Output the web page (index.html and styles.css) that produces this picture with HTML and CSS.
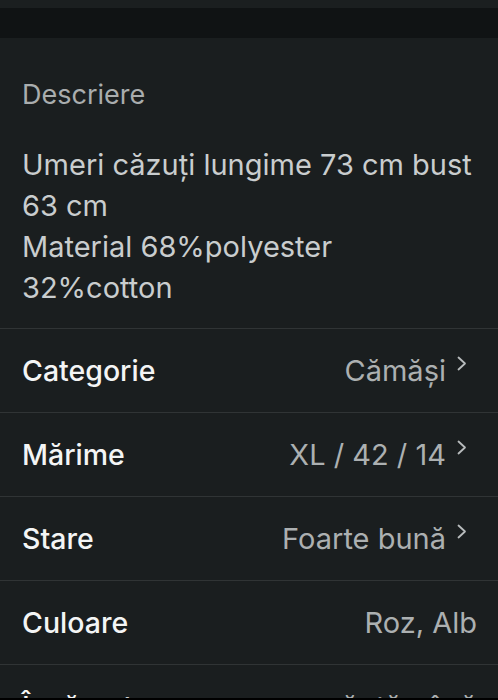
FILE: index.html
```html
<!DOCTYPE html>
<html lang="ro">
<head>
  <meta charset="UTF-8" />
  <meta name="viewport" content="width=device-width, initial-scale=1.0" />
  <title>Detalii articol</title>
  <link rel="stylesheet" href="styles.css">
</head>
<body>
  <div class="topbar"></div>
  <div class="band"></div>

  <div class="description">
    <div class="desc-title">Descriere</div>
    <div class="desc-text">Umeri căzuți lungime 73 cm bust 63 cm<br>Material 68%polyester 32%cotton</div>
  </div>

  <div class="details">
    <div class="row">
      <span class="label">Categorie</span>
      <span class="value">Cămăși<svg class="chev" viewBox="0 0 10 15"><path d="M1.5 1.5 L8 7.5 L1.5 13.5" /></svg></span>
    </div>
    <div class="row">
      <span class="label">Mărime</span>
      <span class="value">XL / 42 / 14<svg class="chev" viewBox="0 0 10 15"><path d="M1.5 1.5 L8 7.5 L1.5 13.5" /></svg></span>
    </div>
    <div class="row">
      <span class="label">Stare</span>
      <span class="value">Foarte bună<svg class="chev" viewBox="0 0 10 15"><path d="M1.5 1.5 L8 7.5 L1.5 13.5" /></svg></span>
    </div>
    <div class="row">
      <span class="label">Culoare</span>
      <span class="value">Roz, Alb</span>
    </div>
    <div class="row">
      <span class="label">Încărcat</span>
      <span class="value">acum o săptămână</span>
    </div>
  </div>
</body>
</html>
```

FILE: styles.css
```css
html {
  background: #000;
}
body {
  margin: 0;
  height: 698px;
  background: #1a1e1f;
  font-family: 'Inter', 'Roboto', sans-serif;
  font-size: 27px;
  line-height: 41px;
  overflow: hidden;
}
.topbar {
  height: 8px;
  background: #1b1f20;
}
.band {
  height: 30px;
  background: #101314;
}
.description {
  padding: 36px 22px 20px;
}
.desc-title {
  color: #a9adae;
  margin-bottom: 29px;
}
.desc-text {
  color: #c9cdce;
  font-size: 29px;
}
.row {
  display: flex;
  justify-content: space-between;
  align-items: center;
  height: 83px;
  border-top: 1px solid #303435;
  padding: 0 21px 0 22px;
}
.label {
  color: #f4f5f5;
  font-size: 28.5px;
  font-weight: 500;
}
.value {
  color: #acb0b1;
  font-size: 29px;
  display: flex;
  align-items: flex-start;
}
.chev {
  width: 10px;
  height: 15px;
  margin: 6px 10px 0 11px;
  fill: none;
  stroke: #b8bcbd;
  stroke-width: 1.8;
  stroke-linecap: round;
  stroke-linejoin: round;
}
```
